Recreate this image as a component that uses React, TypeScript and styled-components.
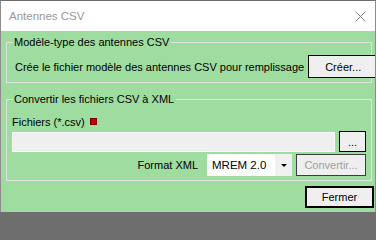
import React from "react"
import styled, { createGlobalStyle } from "styled-components"

const GlobalStyle = createGlobalStyle`
  html, body {
    margin: 0;
    padding: 0;
    background: #6e6e6e;
  }
  body {
    font-family: "Liberation Sans", Arial, sans-serif;
    font-size: 11px;
    color: #000;
  }
`

const Window = styled.div`
  box-sizing: border-box;
  width: 376px;
  height: 211px;
  margin-top: 1px;
  border-left: 1px solid #8c8c8c;
  border-right: 1px solid #8c8c8c;
  display: flex;
  flex-direction: column;
  overflow: hidden;
`

const TitleBar = styled.div`
  height: 30px;
  flex: none;
  background: #fff;
  display: flex;
  align-items: center;
  justify-content: space-between;
  padding: 0 9px 0 8px;
  color: #999;
  font-size: 11.5px;
`

const CloseIcon = () => (
  <svg width="11" height="11" viewBox="0 0 11 11">
    <path d="M0.5 0.5 L10.5 10.5 M10.5 0.5 L0.5 10.5" stroke="#888" strokeWidth="1" />
  </svg>
)

const Body = styled.div`
  flex: 1;
  background: #9fdc9f;
  padding: 3px 3px 0 5px;
  display: flex;
  flex-direction: column;
`

const Group = styled.fieldset`
  margin: 0;
  min-inline-size: 0;
  border: 1px solid #e2e2e2;
  padding: 0;
  display: flex;
  flex-direction: column;
  & + & {
    margin-top: 8px;
  }
`

const Legend = styled.legend`
  margin-left: 6px;
  padding: 0 2px 0 1px;
  line-height: 16px;
`

const Row = styled.div<{ $pad: string; $justify?: string }>`
  display: flex;
  align-items: center;
  justify-content: ${p => p.$justify || "flex-start"};
  padding: ${p => p.$pad};
  gap: 4px;
`

const Label = styled.span<{ $mr?: number }>`
  line-height: 16px;
  white-space: nowrap;
  margin-right: ${p => p.$mr || 0}px;
`

const Button = styled.button<{ $w: number; $h: number; $default?: boolean; $disabled?: boolean }>`
  box-sizing: border-box;
  width: ${p => p.$w}px;
  height: ${p => p.$h}px;
  background: #efefef;
  border: ${p => (p.$default ? "2px solid #000" : p.$disabled ? "1px solid #3c3c3c" : "1px solid #000")};
  color: ${p => (p.$disabled ? "#a0a0a0" : "#000")};
  font-family: inherit;
  font-size: 11px;
  padding: 0;
  flex: none;
`

const RedMark = styled.span`
  display: inline-block;
  width: 5px;
  height: 5px;
  background: #c80000;
  border: 1px solid #7a0000;
  margin-left: 5px;
  vertical-align: 1px;
`

const TextBox = styled.div`
  box-sizing: border-box;
  flex: 1;
  height: 20px;
  background: #efefef;
  border: 1px solid #f8f8f8;
`

const Combo = styled.div`
  box-sizing: border-box;
  width: 85px;
  height: 22px;
  background: #fff;
  display: flex;
  align-items: stretch;
`

const ComboText = styled.span`
  flex: 1;
  padding-left: 5px;
  display: flex;
  align-items: center;
  font-size: 11.5px;
`

const ComboArrow = styled.span`
  width: 17px;
  background: #f0f0f0;
  display: flex;
  align-items: center;
  justify-content: center;
  &::after {
    content: "";
    border-left: 3px solid transparent;
    border-right: 3px solid transparent;
    border-top: 3px solid #000;
  }
`

const Footer = styled.div`
  display: flex;
  justify-content: flex-end;
  padding: 5px 0 0 0;
  margin-right: -2px;
`

export default function App() {
  return (
    <>
      <GlobalStyle />
      <Window>
        <TitleBar>
          <span>Antennes CSV</span>
          <CloseIcon />
        </TitleBar>
        <Body>
          <Group>
            <Legend>Modèle-type des antennes CSV</Legend>
            <Row $pad="5px 5px 4px 8px" $justify="space-between">
              <Label>Crée le fichier modèle des antennes CSV pour remplissage</Label>
              <Button $w={70} $h={23}>Créer...</Button>
            </Row>
          </Group>
          <Group>
            <Legend>Convertir les fichiers CSV à XML</Legend>
            <Row $pad="7px 5px 0 5px">
              <Label>
                Fichiers (*.csv)
                <RedMark />
              </Label>
            </Row>
            <Row $pad="1px 5px 0 5px">
              <TextBox />
              <Button $w={27} $h={21}>...</Button>
            </Row>
            <Row $pad="2px 5px 4px 5px" $justify="flex-end">
              <Label $mr={5}>Format XML</Label>
              <Combo>
                <ComboText>MREM 2.0</ComboText>
                <ComboArrow />
              </Combo>
              <Button $w={70} $h={22} $disabled>Convertir...</Button>
            </Row>
          </Group>
          <Footer>
            <Button $w={69} $h={22} $default>Fermer</Button>
          </Footer>
        </Body>
      </Window>
    </>
  )
}
